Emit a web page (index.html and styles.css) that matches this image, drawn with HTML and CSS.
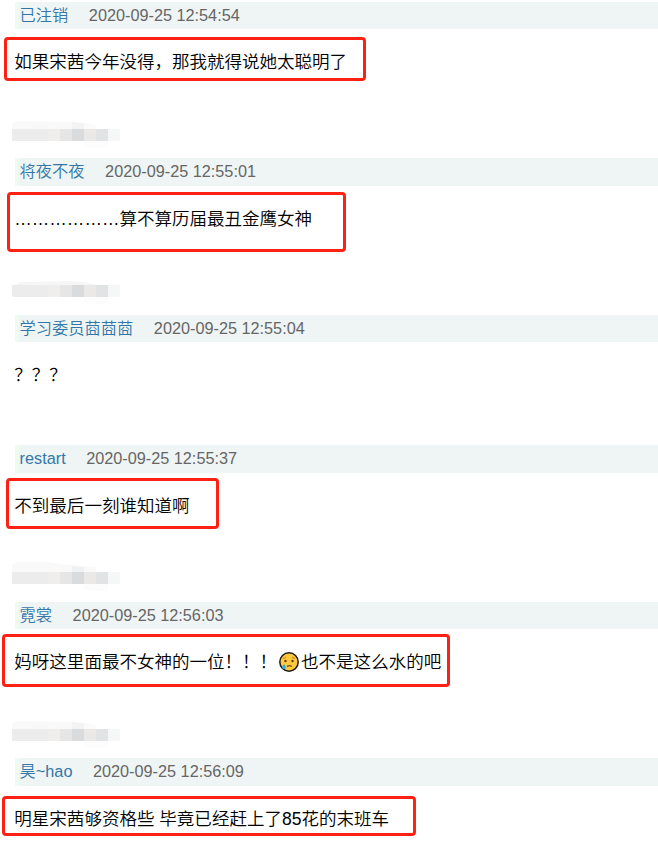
FILE: index.html
```html
<!DOCTYPE html>
<html lang="zh-CN">
<head>
<meta charset="utf-8">
<title>讨论</title>
<link rel="stylesheet" href="styles.css">
</head>
<body>
<svg class="defs" aria-hidden="true">
  <defs>
    <g id="cells">
      <path fill="#ececec" d="M0 10h36v12H0z"/>
      <path fill="#efeeec" d="M36 10h12v12H36z"/>
      <path fill="#e6e6e7" d="M48 10h12v12H48z"/>
      <path fill="#dadbdd" d="M60 10h12v12H60z"/>
      <path fill="#ebe9e7" d="M72 10h12v12H72z"/>
      <path fill="#e1e3e5" d="M84 10h12v12H84z"/>
      <path fill="#f6f8f8" d="M96 10h12v12H96z"/>
      <path fill="#fcfcfc" d="M72 22h24v7H78l-6-2z"/>
    </g>
    <g id="haze">
      <path fill="#f9f9f9" d="M0 10V5l6-3 54 1v7z"/>
      <path fill="#f3f3f4" d="M60 3l12 1v6H60z"/>
      <path fill="#fafafa" d="M72 4l12 2v4H72z"/>
    </g>
  </defs>
</svg>
<main class="thread">
  <article class="post">
    <header class="meta"><a class="name">已注销</a><time>2020-09-25 12:54:54</time></header>
    <p class="text">如果宋茜今年没得，那我就得说她太聪明了</p>
    <span class="mark mark-1"></span>
    <svg class="mosaic" viewBox="0 0 108 30"><use href="#haze"/><use href="#cells"/></svg>
  </article>
  <article class="post tall">
    <header class="meta high"><a class="name">将夜不夜</a><time>2020-09-25 12:55:01</time></header>
    <p class="text"><span class="latin">………………</span>算不算历届最丑金鹰女神</p>
    <span class="mark mark-2"></span>
    <svg class="mosaic rounded" viewBox="0 0 108 30"><path fill="#f6f6f6" d="M3 10l5-3 52-1 12 1 12 3z"/><use href="#cells"/></svg>
  </article>
  <article class="post short">
    <header class="meta"><a class="name">学习委员莔莔莔</a><time>2020-09-25 12:55:04</time></header>
    <p class="text">？？？</p>
  </article>
  <article class="post tall">
    <header class="meta high"><a class="name latin">restart</a><time>2020-09-25 12:55:37</time></header>
    <p class="text">不到最后一刻谁知道啊</p>
    <span class="mark mark-4"></span>
    <svg class="mosaic" viewBox="0 0 108 30"><path fill="#f9f9f9" d="M0 10V3l6-3h30l12 2 24 2 12 1v5z"/><path fill="#f0f1f2" d="M60 4l12 1v5H60z"/><use href="#cells"/></svg>
  </article>
  <article class="post">
    <header class="meta"><a class="name">霓裳</a><time>2020-09-25 12:56:03</time></header>
    <p class="text">妈呀这里面最不女神的一位！！！<svg class="emoji" viewBox="0 0 20 20" role="img" aria-label="哭"><circle cx="10" cy="10" r="9.2" fill="#ffc83d" stroke="#1a1a1a" stroke-width="1.5"/><path d="M4 6.5q2-.3 3-1.5M16 6.5q-2-.3-3-1.5" fill="none" stroke="#c27b13" stroke-width="1"/><circle cx="6.5" cy="9" r="1.2" fill="#593a16"/><circle cx="13.5" cy="9" r="1.2" fill="#593a16"/><path d="M8 14.6q2.5-1.8 4.8 0" fill="none" stroke="#704b1b" stroke-width="1.3"/><path d="M5 12c-1 1.4-1.8 2.4-1.8 3.5a1.8 1.8 0 0 0 3.6 0c0-1.1-.8-2.1-1.8-3.5z" fill="#28aeea"/></svg>也不是这么水的吧</p>
    <span class="mark mark-5"></span>
    <svg class="mosaic" viewBox="0 0 108 30"><use href="#haze"/><use href="#cells"/></svg>
  </article>
  <article class="post last">
    <header class="meta high"><a class="name">昊<span class="latin">~hao</span></a><time>2020-09-25 12:56:09</time></header>
    <p class="text">明星宋茜够资格些<span class="latin"> </span>毕竟已经赶上了<span class="latin">85</span>花的末班车</p>
    <span class="mark mark-6"></span>
  </article>
</main>
</body>
</html>
```
FILE: styles.css
```css
* { box-sizing: border-box; }

body {
  margin: 0;
  background: #fff;
  font-family: "Liberation Sans", "Noto Sans CJK SC", sans-serif;
  overflow: hidden;
}

.defs {
  position: absolute;
  width: 0;
  height: 0;
}

.thread {
  height: 844px;
  padding: 2px 0 0 15px;
  overflow: hidden;
}

.post {
  position: relative;
  height: 156px;
}

.post.tall { height: 157px; }
.post.short { height: 130px; }
.post.last { height: 84px; }

.meta {
  display: flex;
  align-items: flex-start;
  gap: 20.5px;
  height: 27px;
  padding-left: 0.6px;
  border-left: 4px solid #effaf1;
  background: #eff5f4;
  font-size: 16.25px;
  line-height: 27px;
  white-space: nowrap;
  color: #666;
}

.meta.high { height: 28px; }

.name {
  font-weight: 350;
  color: #3377aa;
}

.text {
  display: flex;
  align-items: center;
  height: 36px;
  margin: 15px 0 0 -0.7px;
  font-size: 17.53px;
  font-weight: 350;
  line-height: 36px;
  white-space: pre;
  color: #000;
}

.latin { font-weight: 400; }

.emoji {
  width: 20px;
  height: 20px;
  margin: 0 2px;
}

.mosaic {
  position: absolute;
  left: -3px;
  top: 117px;
  width: 108px;
  height: 30px;
}

.mosaic.rounded { border-radius: 12px 0 0 12px; }

/* Hand-drawn highlight frames laid over the comments */
.mark {
  position: absolute;
  border: 3px solid #ff2114;
  border-radius: 4px;
}

.mark-1 { left: -11px; top: 35px; width: 362px; height: 44px; }
.mark-2 { left: -8px; top: 34px; width: 339px; height: 60px; }
.mark-4 { left: -9px; top: 33px; width: 213px; height: 51px; }
.mark-5 { left: -13px; top: 32px; width: 448px; height: 53px; }
.mark-6 { left: -13px; top: 38px; width: 414px; height: 40px; }
```
